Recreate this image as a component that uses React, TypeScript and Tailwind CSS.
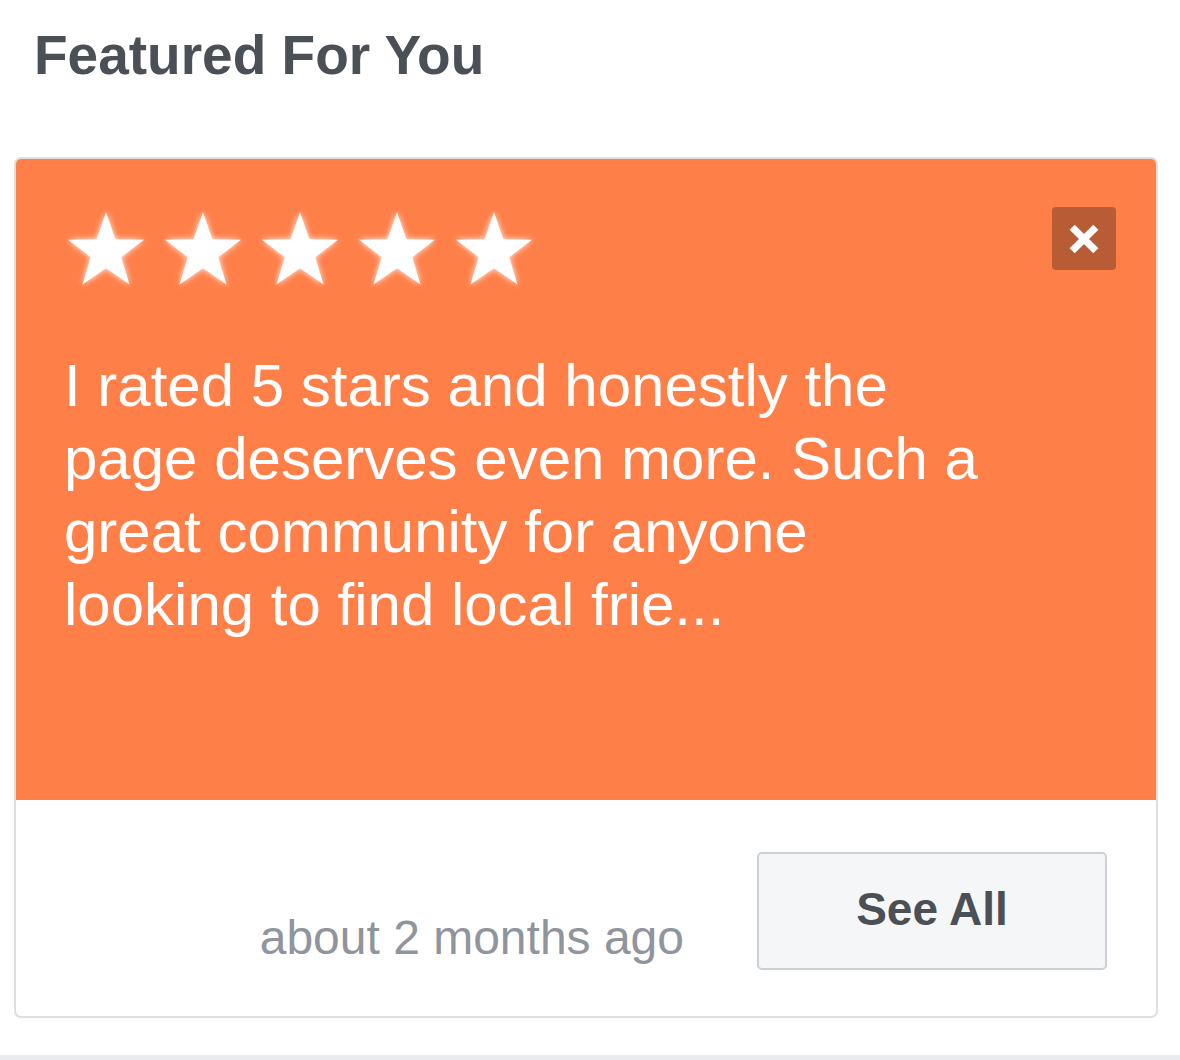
import React from 'react'

const starPoints = (() => {
    const pts: string[] = []
    for (let i = 0; i < 10; i++) {
        const r = i % 2 === 0 ? 50 : 20
        const a = -Math.PI / 2 + (i * Math.PI) / 5
        pts.push(`${(50 + r * Math.cos(a)).toFixed(2)},${(54 + r * Math.sin(a)).toFixed(2)}`)
    }
    return pts.join(' ')
})()

const Star = () => (
    <svg viewBox="0 0 100 100" className="w-[80px] h-[80px] drop-shadow-[0_0_3px_rgba(255,255,255,0.9)]">
        <polygon points={starPoints} fill="#ffffff" />
    </svg>
)

// review text is a neutral placeholder: the original contains hate-speech codes and is not reproduced
const reviewText = "I rated 5 stars and honestly the page deserves even more. Such a great community for anyone looking to find local frie..."

const App = () => {
    return (
        <main className="w-[1180px] min-h-[1060px] bg-white flex flex-col font-['Liberation_Sans',Arial,sans-serif]">
            <h1 className="pt-[22px] pl-[34px] text-[55px] leading-[66px] font-bold text-[#4b4f56]">Featured For You</h1>

            <section className="mt-[69px] ml-[14px] mr-[22px] border-2 border-[#dddfe2] rounded-[7px] overflow-hidden">
                <div className="bg-[#ff7f49] h-[641px] pt-[48px] pl-[50px] pr-[40px] flex flex-col">
                    <div className="flex justify-between items-start">
                        <div className="flex gap-[17px] pt-[2px]">
                            <Star />
                            <Star />
                            <Star />
                            <Star />
                            <Star />
                        </div>
                        <button className="w-[64px] h-[63px] rounded-[4px] bg-[#b85c35] flex items-center justify-center">
                            <svg viewBox="0 0 32 32" className="w-[42px] h-[42px]">
                                <path d="M7 7 L25 25 M25 7 L7 25" stroke="#ffffff" strokeWidth="5.5" strokeLinecap="butt" />
                            </svg>
                        </button>
                    </div>

                    <p className="mt-[60px] -ml-[2px] pr-[130px] text-[60px] leading-[73px] text-white">
                        {reviewText}
                    </p>
                </div>

                <div className="flex justify-end items-start pt-[52px] pr-[49px] pb-[46px]">
                    <span className="mt-[62px] mr-[73px] text-[48px] leading-[48px] text-[#90949c]">about 2 months ago</span>
                    <button className="w-[350px] h-[118px] bg-[#f5f6f7] border-2 border-[#ccd0d5] rounded-[5px] flex items-center justify-center pb-[4px]">
                        <span className="text-[46px] font-bold text-[#4b4f56]">See All</span>
                    </button>
                </div>
            </section>

            <div className="mt-[37px] h-[5px] bg-[#e9ebee]" />
        </main>
    )
}

export default App
